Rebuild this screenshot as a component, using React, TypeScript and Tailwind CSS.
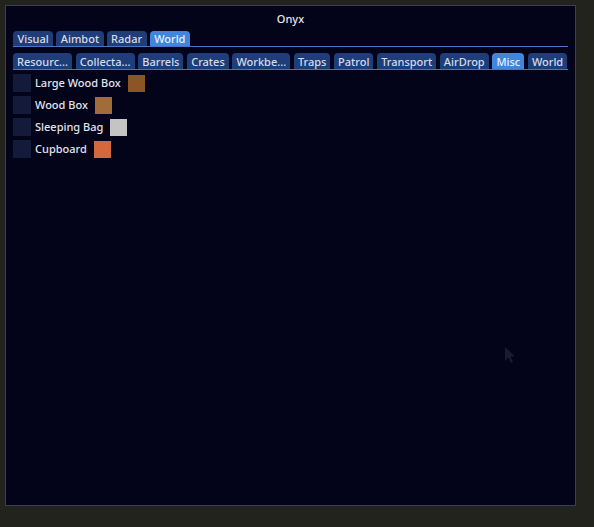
import React from "react";

const top = ["Visual", "Aimbot", "Radar", "World"];
const sub = ["Resourc...", "Collecta...", "Barrels", "Crates", "Workbe...", "Traps", "Patrol", "Transport", "AirDrop", "Misc", "World"];
const items: [string, string][] = [
  ["Large Wood Box", "#8b5526"],
  ["Wood Box", "#a26b3a"],
  ["Sleeping Bag", "#c4c4c4"],
  ["Cupboard", "#d4683a"],
];

function Tab({ label, active, big }: { label: string; active?: boolean; big?: boolean }) {
  return (
    <div
      className={
        "rounded-t-[4px] flex items-center text-[11px] font-medium leading-none " +
        (big ? "h-[15px] px-[4.5px] " : "h-[16px] px-[4px] ") +
        (active ? "bg-[#3f86dc] text-[#e6eefa]" : "bg-[#1f3d78] text-[#d6dbe8]")
      }
    >
      {label}
    </div>
  );
}

export default function App() {
  return (
    <div
      className="w-[594px] h-[527px] bg-[#23231d] pt-[5px] pl-[5px]"
      style={{ fontFamily: '"Noto Sans", sans-serif' }}
    >
      <div className="relative w-[571px] h-[501px] bg-[#03031a] border border-[#3c3e55] flex flex-col">
        <div className="h-[25px] pt-[2px] flex items-center justify-center text-[11px] font-medium text-[#e8e8ee]">Onyx</div>
        <div className="px-[7px]">
          <div className="flex gap-[3px] border-b border-[#4a74c0]">
            {top.map((t) => (
              <Tab key={t} label={t} big active={t === "World"} />
            ))}
          </div>
          <div className="flex gap-[3.7px] mt-[6px] border-b border-[#4a74c0]">
            {sub.map((t, i) => (
              <Tab key={t + i} label={t} active={t === "Misc"} />
            ))}
          </div>
          <div className="flex flex-col gap-[4px] mt-[4px]">
            {items.map(([name, color]) => (
              <div key={name} className="flex items-center h-[18px]">
                <div className="w-[18px] h-[18px] bg-[#141a3a]" />
                <span className="ml-[4px] text-[11px] font-medium text-[#e2e4ec]">{name}</span>
                <div className="ml-[7px] w-[17px] h-[17px]" style={{ background: color }} />
              </div>
            ))}
          </div>
        </div>
        <svg className="absolute left-[498px] top-[340px]" width="14" height="20" viewBox="0 0 14 20">
          <path d="M1 1 L1 15 L4.5 11.5 L7 17 L9 16 L6.5 10.5 L11 10.5 Z" fill="#1a1b33" />
        </svg>
      </div>
    </div>
  );
}
